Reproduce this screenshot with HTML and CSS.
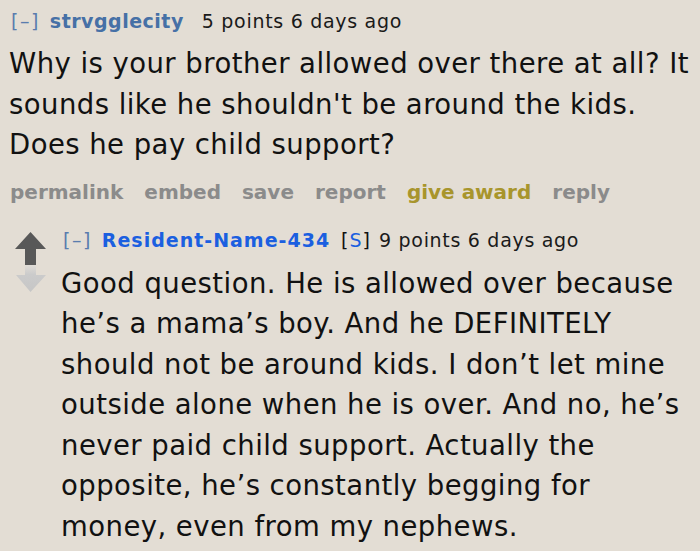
FILE: index.html
```html
<!DOCTYPE html>
<html>
<head>
<meta charset="utf-8">
<link rel="stylesheet" href="styles.css">
</head>
<body>
<div class="comment top">
  <div class="tagline">
    <span class="expand">[–]</span>
    <span class="author visited">strvgglecity</span>
    <span class="score">5 points 6 days ago</span>
  </div>
  <div class="body">Why is your brother allowed over there at all? It<br>sounds like he shouldn't be around the kids.<br>Does he pay child support?</div>
  <ul class="buttons">
    <li>permalink</li>
    <li>embed</li>
    <li>save</li>
    <li>report</li>
    <li class="gold">give award</li>
    <li>reply</li>
  </ul>
</div>
<div class="comment child">
  <svg class="votes" width="32" height="62" viewBox="0 0 32 62">
    <defs>
      <linearGradient id="fade" x1="0" y1="0" x2="0" y2="1">
        <stop offset="0" stop-color="#e0dcd6"/>
        <stop offset="0.35" stop-color="#cbcbcb"/>
        <stop offset="1" stop-color="#c6c6c6"/>
      </linearGradient>
    </defs>
    <path d="M15.5 0 L31 17 L21 17 L21 33 L10 33 L10 17 L0 17 Z" fill="#585858"/>
    <path d="M10 33 L21 33 L21 43 L31 43 L15.5 60 L1 43 L10 43 Z" fill="url(#fade)"/>
  </svg>
  <div class="entry">
    <div class="tagline">
      <span class="expand">[–]</span>
      <span class="author op">Resident-Name-434</span>
      <span class="sub">[<span class="s">S</span>]</span>
      <span class="score">9 points 6 days ago</span>
    </div>
    <div class="body">Good question. He is allowed over because<br>he’s a mama’s boy. And he DEFINITELY<br>should not be around kids. I don’t let mine<br>outside alone when he is over. And no, he’s<br>never paid child support. Actually the<br>opposite, he’s constantly begging for<br>money, even from my nephews.</div>
  </div>
</div>
</body>
</html>
```

FILE: styles.css
```css
html, body {
  margin: 0;
  padding: 0;
  background: #e3ddd4;
}
body {
  font-family: "DejaVu Sans", Verdana, sans-serif;
  color: #111;
  width: 700px;
  height: 551px;
  overflow: hidden;
}
.comment.top {
  padding: 7px 0 0 9px;
}
.tagline {
  display: flex;
  align-items: baseline;
  font-size: 19px;
  line-height: 28px;
  white-space: nowrap;
}
.expand {
  color: #5a7cae;
  letter-spacing: 1.5px;
  margin-left: 2px;
  margin-right: 10px;
}
.author {
  font-weight: bold;
  letter-spacing: 0.5px;
  margin-right: 18px;
}
.author.visited {
  color: #4670a6;
}
.score {
  color: #1a1a1a;
  letter-spacing: 0.7px;
}
.author.op {
  color: #1b5fe0;
  letter-spacing: 1px;
  margin-right: 11px;
}
.sub {
  color: #111;
  letter-spacing: 1px;
  margin-right: 8px;
}
.sub .s {
  color: #1b5fe0;
}
.body {
  font-size: 27.5px;
  line-height: 40.5px;
  letter-spacing: 0.45px;
  color: #111;
  margin-top: 8px;
  white-space: nowrap;
}
.buttons {
  list-style: none;
  margin: 12px 0 0 1px;
  padding: 0;
  display: flex;
  gap: 21px;
  font-size: 20px;
  line-height: 30px;
  font-weight: bold;
  color: #8b8b8b;
}
.buttons .gold {
  color: #a8952c;
}
.comment.child {
  display: flex;
  align-items: flex-start;
  padding: 19px 0 0 15px;
}
.votes {
  display: block;
  flex: none;
  margin-top: 6px;
}
.entry {
  flex: 1;
  margin-left: 14px;
}
.child .body {
  margin-top: 9px;
}
```
